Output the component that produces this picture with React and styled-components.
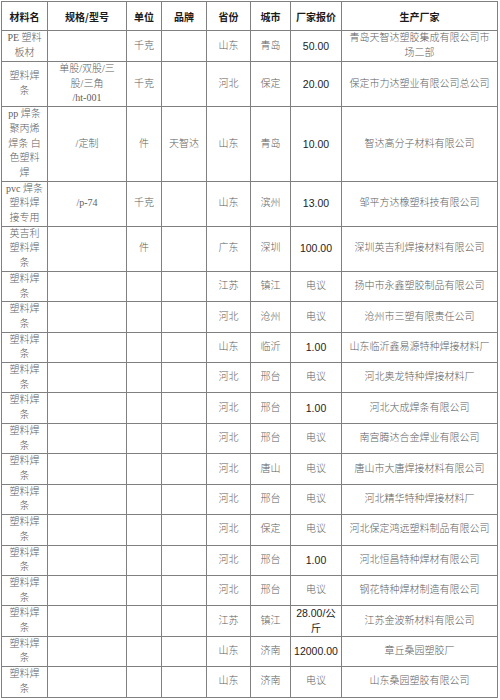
import React from 'react';
import styled, { createGlobalStyle } from 'styled-components';

const GlobalStyle = createGlobalStyle`
  html, body {
    margin: 0;
    padding: 0;
    background: #fff;
  }
`;

const cols = [46, 79, 35, 45, 44, 40, 51, 156];
const heads = ['材料名', '规格/型号', '单位', '品牌', '省份', '城市', '厂家报价', '生产厂家'];

const W = ['塑料焊', '条'];

const rows = [
  { name: ['PE 塑料', '板材'], spec: [], unit: '千克', brand: '', prov: '山东', city: '青岛', price: ['50.00'], maker: ['青岛天智达塑胶集成有限公司市', '场二部'], h: 31 },
  { name: W, spec: ['单股/双股/三', '股/三角', '/ht-001'], unit: '千克', brand: '', prov: '河北', city: '保定', price: ['20.00'], maker: ['保定市力达塑业有限公司总公司'] },
  { name: ['pp 焊条', '聚丙烯', '焊条 白', '色塑料', '焊'], spec: ['/定制'], unit: '件', brand: '天智达', prov: '山东', city: '青岛', price: ['10.00'], maker: ['智达高分子材料有限公司'] },
  { name: ['pvc 焊条', '塑料焊', '接专用'], spec: ['/p-74'], unit: '千克', brand: '', prov: '山东', city: '滨州', price: ['13.00'], maker: ['邹平方达橡塑科技有限公司'] },
  { name: ['英吉利', '塑料焊', '条'], spec: [], unit: '件', brand: '', prov: '广东', city: '深圳', price: ['100.00'], maker: ['深圳英吉利焊接材料有限公司'] },
  { name: W, prov: '江苏', city: '镇江', price: ['电议'], maker: ['扬中市永鑫塑胶制品有限公司'] },
  { name: W, prov: '河北', city: '沧州', price: ['电议'], maker: ['沧州市三塑有限责任公司'] },
  { name: W, prov: '山东', city: '临沂', price: ['1.00'], maker: ['山东临沂鑫易源特种焊接材料厂'] },
  { name: W, prov: '河北', city: '邢台', price: ['电议'], maker: ['河北奥龙特种焊接材料厂'] },
  { name: W, prov: '河北', city: '邢台', price: ['1.00'], maker: ['河北大成焊条有限公司'] },
  { name: W, prov: '河北', city: '邢台', price: ['电议'], maker: ['南宫腾达合金焊业有限公司'] },
  { name: W, prov: '河北', city: '唐山', price: ['电议'], maker: ['唐山市大唐焊接材料有限公司'] },
  { name: W, prov: '河北', city: '邢台', price: ['电议'], maker: ['河北精华特种焊接材料厂'] },
  { name: W, prov: '河北', city: '保定', price: ['电议'], maker: ['河北保定鸿远塑料制品有限公司'] },
  { name: W, prov: '河北', city: '邢台', price: ['1.00'], maker: ['河北恒昌特种焊材有限公司'] },
  { name: W, prov: '河北', city: '邢台', price: ['电议'], maker: ['钢花特种焊材制造有限公司'] },
  { name: W, prov: '江苏', city: '镇江', price: ['28.00/公', '斤'], maker: ['江苏金波新材料有限公司'] },
  { name: W, prov: '山东', city: '济南', price: ['12000.00'], maker: ['章丘桑园塑胶厂'] },
  { name: W, prov: '山东', city: '济南', price: ['电议'], maker: ['山东桑园塑胶有限公司'] },
];

const Lines = ({ items = [] }) =>
  items.map((t, i) => (
    <React.Fragment key={i}>
      {i > 0 && <br />}
      {t}
    </React.Fragment>
  ));

export default function App() {
  return (
    <>
      <GlobalStyle />
      <Page>
        <Table>
          <colgroup>
            {cols.map((w, i) => (
              <col key={i} style={{ width: w }} />
            ))}
          </colgroup>
          <thead>
            <tr>
              {heads.map((h) => (
                <Th key={h}>{h}</Th>
              ))}
            </tr>
          </thead>
          <tbody>
            {rows.map((r, i) => {
              const numeric = /^\d/.test(r.price[0]);
              return (
                <Row key={i} $h={r.h}>
                  <Td><Lines items={r.name} /></Td>
                  <Td><Lines items={r.spec} /></Td>
                  <Td>{r.unit}</Td>
                  <Td>{r.brand}</Td>
                  <Td>{r.prov}</Td>
                  <Td>{r.city}</Td>
                  <Td $num={numeric}><Lines items={r.price} /></Td>
                  <Td><Lines items={r.maker} /></Td>
                </Row>
              );
            })}
          </tbody>
        </Table>
      </Page>
    </>
  );
}

const Page = styled.div`
  padding: 1px 1px 0 1px;
  width: 500px;
  box-sizing: border-box;
`;

const Table = styled.table`
  width: 497px;
  table-layout: fixed;
  border-collapse: collapse;
  border: 1.5px solid #666;
`;

const Th = styled.th`
  height: 28px;
  padding: 0;
  border: 1px solid #808080;
  font-family: "Noto Sans CJK SC", sans-serif;
  font-size: 10px;
  font-weight: 700;
  color: #1a1a1a;
  text-align: center;
  vertical-align: middle;
`;

const Row = styled.tr`
  height: ${(p) => (p.$h ? `${p.$h}px` : 'auto')};
`;

const Td = styled.td`
  padding: 0 2px;
  border: 1px solid #808080;
  font-family: ${(p) =>
    p.$num
      ? '"Liberation Sans", "Noto Sans CJK SC", sans-serif'
      : '"Liberation Serif", "Noto Sans CJK SC", serif'};
  font-size: ${(p) => (p.$num ? '10.5px' : '10px')};
  line-height: 14.7px;
  color: ${(p) => (p.$num ? '#222' : '#5e5e5e')};
  font-weight: ${(p) => (p.$num ? 400 : 300)};
  text-align: center;
  vertical-align: middle;
  white-space: nowrap;
  overflow: hidden;
`;
